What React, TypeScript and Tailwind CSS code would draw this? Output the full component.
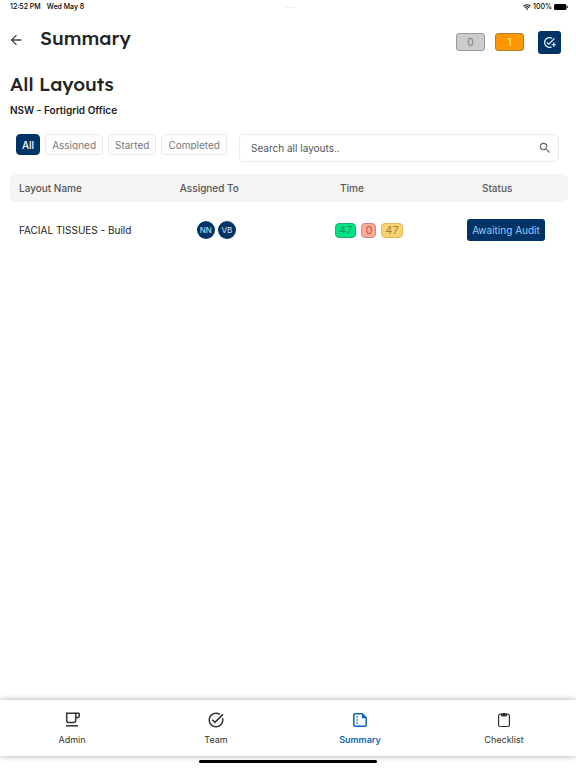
import clsx from "clsx";
import { type ReactNode, useState } from "react";
import { MdArrowBack, MdOutlineAddTask, MdOutlineTaskAlt, MdSearch } from "react-icons/md";

const FILTERS = ["All", "Assigned", "Started", "Completed"];

const LAYOUTS = [
  {
    name: "FACIAL TISSUES - Build",
    assigned: ["NN", "VB"],
    time: { done: 47, over: 0, total: 47 },
    status: "Awaiting Audit",
  },
];

function CupIcon() {
  return (
    <svg viewBox="0 0 16 16" className="size-4" fill="none" stroke="currentColor" strokeWidth="1.5">
      <path d="M2.7 1.3h9v7.2a2 2 0 0 1-2 2h-5a2 2 0 0 1-2-2z" />
      <path d="M11.7 1.3h2.9a.6.6 0 0 1 .6.6v2.4a1.3 1.3 0 0 1-1.3 1.3h-2.2" />
      <path d="M2 13.8h12" />
    </svg>
  );
}

function SummaryIcon() {
  return (
    <svg viewBox="0 0 16 16" className="size-4" fill="none" stroke="currentColor" strokeWidth="1.5">
      <path d="M2.8 1.8h7.4L14.2 5.8v7.4a1 1 0 0 1-1 1H2.8a1 1 0 0 1-1-1V2.8a1 1 0 0 1 1-1z" />
      <path d="M9.8 1.3 14.8 6.3H9.8z" fill="currentColor" stroke="none" />
      <path d="M4.4 5h1.4M4.4 8h1.4M4.4 11h1.4" strokeWidth="1.3" />
    </svg>
  );
}

function ClipboardIcon() {
  return (
    <svg viewBox="0 0 16 16" className="size-4" fill="none" stroke="currentColor" strokeWidth="1.2">
      <rect x="2.6" y="2.1" width="10.8" height="12.4" rx="1.8" />
      <path d="M5 1.8h1.5a1.6 1.6 0 0 1 3 0H11v1.4a1.4 1.4 0 0 1-1.4 1.4H6.4A1.4 1.4 0 0 1 5 3.2z" fill="currentColor" stroke="none" />
    </svg>
  );
}

const TABS = [
  { label: "Admin", icon: <CupIcon /> },
  { label: "Team", icon: <MdOutlineTaskAlt className="size-[18px]" /> },
  { label: "Summary", icon: <SummaryIcon /> },
  { label: "Checklist", icon: <ClipboardIcon /> },
];

function StatusBar() {
  return (
    <div className="flex h-3.5 items-center pr-2 pl-2.5 text-[7px] font-medium text-black">
      <div className="flex flex-1 gap-1.5">
        <span>12:52 PM</span>
        <span>Wed May 8</span>
      </div>
      <div className="flex gap-0.5">
        <i className="size-px bg-neutral-300" />
        <i className="size-px bg-neutral-300" />
        <i className="size-px bg-neutral-300" />
      </div>
      <div className="flex flex-1 items-center justify-end gap-0.5">
        <svg viewBox="0 0 16 12" className="h-1.5 w-2" fill="none" stroke="currentColor" strokeWidth="2.2">
          <path d="M1 4.5a10 10 0 0 1 14 0M3.6 7.4a6.2 6.2 0 0 1 8.8 0" />
          <path d="M8 12 5.6 9.5a3.4 3.4 0 0 1 4.8 0z" fill="currentColor" stroke="none" />
        </svg>
        <span>100%</span>
        <svg viewBox="0 0 28 12" className="h-1.5 w-3.5" fill="currentColor">
          <rect width="25" height="12" rx="3" />
          <path d="M26 4a2 2 0 0 1 0 4z" />
        </svg>
      </div>
    </div>
  );
}

function TimePill({ className, children }: { className: string; children: ReactNode }) {
  return (
    <span className={clsx("flex h-[15px] items-center rounded border px-[3px] text-[11px]", className)}>
      {children}
    </span>
  );
}

function App() {
  const [filter, setFilter] = useState("All");
  const [tab, setTab] = useState("Summary");
  const [query, setQuery] = useState("");

  const rows = LAYOUTS.filter((layout) => layout.name.toLowerCase().includes(query.toLowerCase()));

  return (
    <div className="flex min-h-screen flex-col bg-white font-['Inter',sans-serif] text-[#222]">
      <StatusBar />

      <header className="flex h-12 items-center pr-[15px] pl-2">
        <button type="button" aria-label="Back" className="mt-1 text-[#444]">
          <MdArrowBack className="size-4" />
        </button>
        <h1 className="ml-4 flex-1 font-['Lexend','Inter',sans-serif] text-[19px] font-medium">Summary</h1>
        <div className="mt-2 flex items-center">
          <button
            type="button"
            className="h-[18px] w-[29px] rounded-[3px] border border-[#999] bg-[#ccc] text-[10px] leading-4 text-[#777]"
          >
            0
          </button>
          <button
            type="button"
            className="ml-2.5 h-[18px] w-[29px] rounded-[3px] border border-[#b08030] bg-[#ff9800] text-[10px] leading-4 text-[#ffe5bd]"
          >
            1
          </button>
          <button
            type="button"
            aria-label="Add task"
            className="ml-3.5 flex size-[23px] items-center justify-center rounded-[3px] bg-[#003366] text-white"
          >
            <MdOutlineAddTask className="size-[13px]" />
          </button>
        </div>
      </header>

      <main className="flex-1 pr-2 pl-2.5">
        <h2 className="mt-2 font-['Lexend','Inter',sans-serif] text-[19px] leading-7 font-medium">All Layouts</h2>
        <p className="mt-1 text-[10px] leading-4 font-semibold">NSW - Fortigrid Office</p>

        <div className="mt-4 flex pr-[9px] pl-1.5">
          <div className="flex items-start gap-[5px]">
            {FILTERS.map((name) => (
              <button
                key={name}
                type="button"
                onClick={() => setFilter(name)}
                className={clsx(
                  "flex h-[21px] items-center rounded border text-[10px]",
                  filter === name
                    ? "border-[#003366] bg-[#003366] px-[5px] font-medium text-white"
                    : "border-[#eaeaea] bg-white px-1.5 text-[#777]",
                )}
              >
                <span className="overflow-hidden leading-[10px]">{name}</span>
              </button>
            ))}
          </div>
          <div className="ml-3 flex h-7 flex-1 items-center rounded-[5px] border border-[#ebebeb] pr-1.5 pl-[11px]">
            <input
              type="text"
              aria-label="Search all layouts"
              placeholder="Search all layouts.."
              value={query}
              onChange={(e) => setQuery(e.currentTarget.value)}
              className="min-w-0 flex-1 text-[10px] outline-none placeholder:text-[#555]"
            />
            <button type="button" aria-label="Search" className="text-[#666]">
              <MdSearch className="size-3.5" />
            </button>
          </div>
        </div>

        <table className="mt-3 w-full table-fixed text-left text-[10px]">
          <thead>
            <tr className="h-7 text-[#555] *:bg-[#f5f5f5] *:font-medium">
              <th className="w-[29%] rounded-l-md pl-[9px]">Layout Name</th>
              <th className="w-[28%] pl-2">Assigned To</th>
              <th className="w-[24%] pl-3">Time</th>
              <th className="w-[19%] rounded-r-md pl-5">Status</th>
            </tr>
          </thead>
          <tbody>
            {rows.map((layout) => (
              <tr key={layout.name} className="h-14">
                <td className="pl-[9px]">{layout.name}</td>
                <td className="pl-[25px]">
                  <div className="flex gap-[3px]">
                    {layout.assigned.map((initials) => (
                      <span
                        key={initials}
                        className="flex size-[18px] items-center justify-center rounded-full bg-[#003366] text-[8px] text-[#dce8f5]"
                      >
                        {initials}
                      </span>
                    ))}
                  </div>
                </td>
                <td className="pl-[7px]">
                  <div className="flex gap-[5px]">
                    <TimePill className="border-[#1cb070] bg-[#00e582] text-[#1f9a61]">{layout.time.done}</TimePill>
                    <TimePill className="border-[#d98677] bg-[#ffab99] text-[#b75c4c]">{layout.time.over}</TimePill>
                    <TimePill className="border-[#dcb95c] bg-[#f9d271] text-[#a1813a]">{layout.time.total}</TimePill>
                  </div>
                </td>
                <td className="pl-[5px]">
                  <span className="flex h-[22px] w-[78px] items-center justify-center rounded-[3px] bg-[#003366] whitespace-nowrap text-[#9cc8f3]">
                    {layout.status}
                  </span>
                </td>
              </tr>
            ))}
          </tbody>
        </table>
      </main>

      <nav className="grid h-14 grid-cols-4 bg-white shadow-[0_0_6px_rgba(0,0,0,0.35)]">
        {TABS.map(({ label, icon }) => (
          <button
            key={label}
            type="button"
            onClick={() => setTab(label)}
            className={clsx(
              "flex flex-col items-center pt-2.5 text-[9px]",
              tab === label ? "font-semibold text-[#0b66b5]" : "text-[#333]",
            )}
          >
            <span className="flex h-5 items-center">{icon}</span>
            <span className="mt-1 leading-3">{label}</span>
          </button>
        ))}
      </nav>
      <div className="flex h-3 items-start justify-center pt-1">
        <div className="h-[3px] w-[31%] rounded-full bg-black" />
      </div>
    </div>
  );
}

export default App;
